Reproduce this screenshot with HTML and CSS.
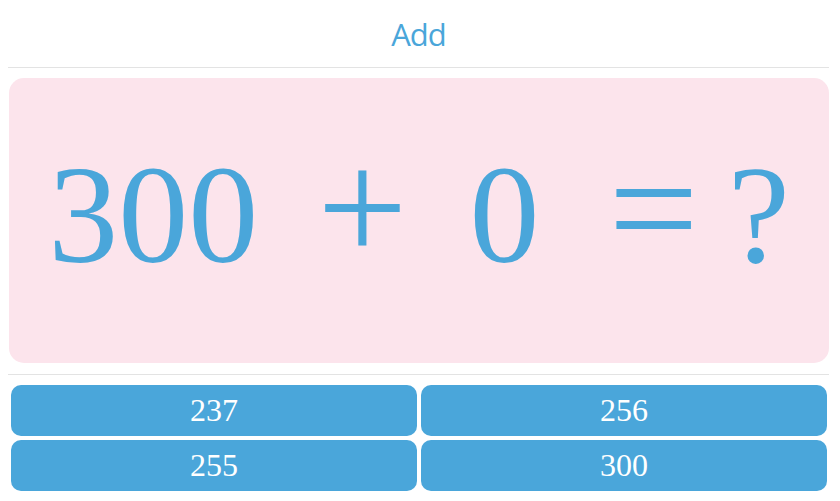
FILE: index.html
```html
<!DOCTYPE html>
<html>
<head>
<meta charset="utf-8">
<link rel="stylesheet" href="styles.css">
</head>
<body>
<div class="app">
  <header class="title">Add</header>
  <section class="problem">
    <div class="equation">
      <span class="num">300</span>
      <span class="op op-plus">+</span>
      <span class="num num-b">0</span>
      <span class="op op-eq">=</span>
      <span class="num num-q">?</span>
    </div>
  </section>
  <div class="answers">
    <button class="answer">237</button>
    <button class="answer">256</button>
    <button class="answer">255</button>
    <button class="answer">300</button>
  </div>
</div>
</body>
</html>
```

FILE: styles.css
```css
html, body {
  margin: 0;
  padding: 0;
  background: #ffffff;
}
.app {
  margin: 0 8px;
  width: 821px;
}
.title {
  height: 68px;
  border-bottom: 1px solid #e3e3e3;
  display: flex;
  align-items: center;
  justify-content: center;
  font-family: "Open Sans", sans-serif;
  font-size: 31px;
  color: #4aa6da;
  letter-spacing: -1px;
  box-sizing: border-box;
}
.problem {
  margin: 10px 0 11px 1px;
  height: 285px;
  background: #fce4ec;
  border-radius: 15px;
  display: flex;
  align-items: center;
  justify-content: center;
}
.equation {
  display: flex;
  align-items: baseline;
  font-family: "Liberation Serif", "Times New Roman", serif;
  color: #4aa6da;
  white-space: nowrap;
  line-height: 1;
  padding-bottom: 26px;
}
.num {
  font-size: 140px;
}
.op {
  font-size: 160px;
}
.op-plus { margin-left: 59px; }
.num-b { margin-left: 62px; }
.op-eq { margin-left: 69px; }
.num-q { margin-left: 29px; }
.answers {
  border-top: 1px solid #e3e3e3;
  padding-top: 10px;
  display: grid;
  grid-template-columns: 1fr 1fr;
  gap: 4px;
  padding-left: 3px;
  padding-right: 2px;
}
.answer {
  height: 51px;
  border: 0;
  border-radius: 10px;
  background: #4aa6da;
  color: #ffffff;
  font-family: "Liberation Serif", "Times New Roman", serif;
  font-size: 32px;
  padding: 0;
}
```
